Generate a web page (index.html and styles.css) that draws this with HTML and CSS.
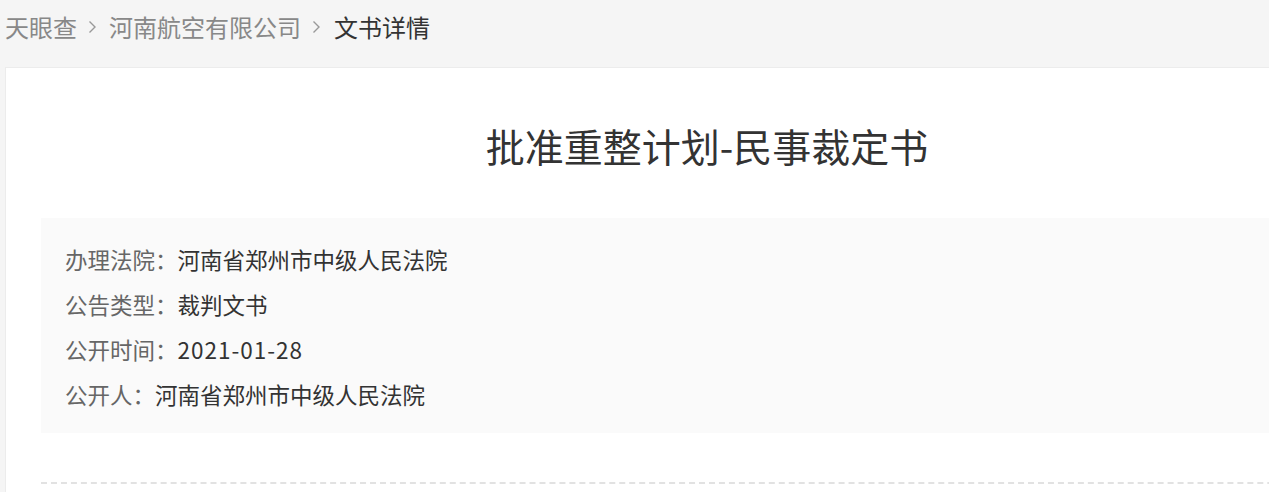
FILE: index.html
```html
<!DOCTYPE html>
<html lang="zh-CN">
<head>
    <meta charset="UTF-8">
    <meta name="viewport" content="width=device-width, initial-scale=1.0">
    <link rel="stylesheet" href="styles.css">
    <title>文书详情</title>
</head>
<body>

    <div class="page">
        <nav class="breadcrumb">
            <a class="crumb" href="#">天眼查</a>
            <svg class="sep" width="9" height="14" viewBox="0 0 9 14"><path d="M1.5 1.5 L7 7 L1.5 12.5" fill="none" stroke="#999" stroke-width="1.4"/></svg>
            <a class="crumb" href="#">河南航空有限公司</a>
            <svg class="sep" width="9" height="14" viewBox="0 0 9 14"><path d="M1.5 1.5 L7 7 L1.5 12.5" fill="none" stroke="#999" stroke-width="1.4"/></svg>
            <span class="crumb current">文书详情</span>
        </nav>

        <div class="doc-card">
            <h1 class="doc-title">批准重整计划-民事裁定书</h1>

            <div class="doc-info">
                <div class="info-row"><span class="info-label">办理法院：</span><span class="info-value">河南省郑州市中级人民法院</span></div>
                <div class="info-row"><span class="info-label">公告类型：</span><span class="info-value">裁判文书</span></div>
                <div class="info-row"><span class="info-label">公开时间：</span><span class="info-value info-date">2021-01-28</span></div>
                <div class="info-row"><span class="info-label">公开人：</span><span class="info-value">河南省郑州市中级人民法院</span></div>
            </div>

            <div class="doc-divider"></div>
        </div>
    </div>

</body>
</html>
```

FILE: styles.css
```css
body {
    font-family: "Noto Sans CJK SC", "Noto Sans", sans-serif;
    margin: 0;
    padding: 0;
    background-color: #f5f5f5;
    overflow: hidden;
}

.page {
    padding: 0 0 0 5px;
    width: 1404px;
}

.breadcrumb {
    display: flex;
    align-items: center;
    height: 54px;
    font-size: 24px;
    gap: 12px;
    margin-bottom: 13px;
}

.crumb {
    color: #888;
    text-decoration: none;
    line-height: 54px;
}

.crumb.current {
    color: #333;
    margin-left: 1px;
}

.sep {
    display: block;
    margin: 0 0 0 -1px;
}

.doc-card {
    background-color: #ffffff;
    border: 1px solid #ececec;
    padding: 47px 35px 0 35px;
    height: 420px;
}

.doc-title {
    margin: 0;
    font-size: 39px;
    font-weight: normal;
    color: #333;
    text-align: center;
    line-height: 60px;
}

.doc-info {
    margin-top: 43px;
    background-color: #fafafa;
    padding: 19px 24px 16px 24px;
    font-size: 22.5px;
}

.info-row {
    line-height: 45px;
}

.info-label {
    color: #666;
}

.info-value {
    color: #333;
}

.info-date {
    letter-spacing: 1px;
}

.doc-divider {
    margin-top: 49px;
    border-top: 2px dashed #e2e2e2;
}
```
